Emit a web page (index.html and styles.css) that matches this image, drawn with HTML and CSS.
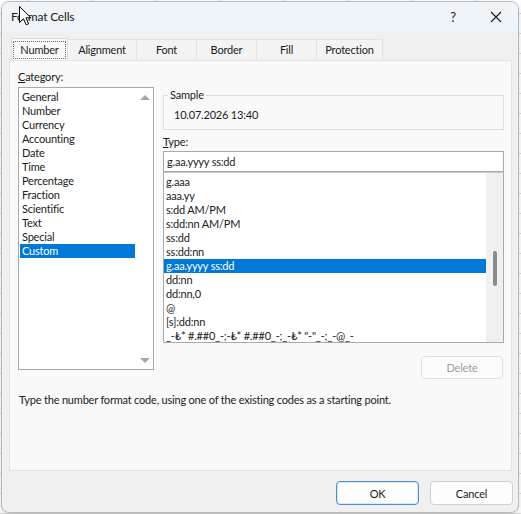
FILE: index.html
```html
<!DOCTYPE html>
<html lang="en">
<head>
    <meta charset="UTF-8">
    <meta name="viewport" content="width=device-width, initial-scale=1.0">
    <title>Format Cells</title>
    <link rel="stylesheet" href="styles.css">
</head>
<body>
    <div class="window">
        <div class="titlebar">
            <span class="title">Format Cells</span>
            <span class="help">?</span>
            <span class="close">
                <svg width="12" height="12" viewBox="0 0 12 12"><path d="M1 1L11 11M11 1L1 11" stroke="#1a1a1a" stroke-width="1.1" fill="none"/></svg>
            </span>
        </div>
        <div class="content">
            <!-- tab strip -->
            <div class="tabs">
                <div class="tab active"><span class="focus">Number</span></div>
                <div class="tab w-align">Alignment</div>
                <div class="tab w-60">Font</div>
                <div class="tab w-60">Border</div>
                <div class="tab w-60">Fill</div>
                <div class="tab w-prot">Protection</div>
            </div>
            <div class="panel">
                <div class="columns">
                    <div class="col-left">
                        <div class="label"><u>C</u>ategory:</div>
                        <div class="listbox category">
                            <ul class="items">
                                <li>General</li>
                                <li>Number</li>
                                <li>Currency</li>
                                <li>Accounting</li>
                                <li>Date</li>
                                <li>Time</li>
                                <li>Percentage</li>
                                <li>Fraction</li>
                                <li>Scientific</li>
                                <li>Text</li>
                                <li>Special</li>
                                <li class="selected">Custom</li>
                            </ul>
                            <div class="vscroll plain">
                                <span class="arrow up"></span>
                                <span class="arrow down"></span>
                            </div>
                        </div>
                    </div>
                    <div class="col-right">
                        <fieldset class="sample">
                            <legend>Sample</legend>
                            <div class="sample-value">10.07.2026 13:40</div>
                        </fieldset>
                        <div class="label type-label"><u>T</u>ype:</div>
                        <div class="input">g.aa.yyyy ss:dd</div>
                        <div class="listbox types">
                            <ul class="items">
                                <li>g.aaa</li>
                                <li>aaa.yy</li>
                                <li>s:dd AM/PM</li>
                                <li>s:dd:nn AM/PM</li>
                                <li>ss:dd</li>
                                <li>ss:dd:nn</li>
                                <li class="selected">g.aa.yyyy ss:dd</li>
                                <li>dd:nn</li>
                                <li>dd:nn,0</li>
                                <li>@</li>
                                <li>[s]:dd:nn</li>
                                <li>_-₺* #.##0_-;-₺* #.##0_-;_-₺* "-"_-;_-@_-</li>
                            </ul>
                            <div class="vscroll track">
                                <span class="thumb"></span>
                            </div>
                        </div>
                        <div class="actions">
                            <button class="btn" disabled>Delete</button>
                        </div>
                    </div>
                </div>
                <p class="hint">Type the number format code, using one of the existing codes as a starting point.</p>
            </div>
            <div class="footer">
                <button class="btn default">OK</button>
                <button class="btn">Cancel</button>
            </div>
        </div>
    </div>
    <!-- mouse pointer sitting over the title -->
    <svg class="cursor" width="13" height="20" viewBox="0 0 13 20">
        <path d="M0.5 0.5L0.5 16.5L4.5 12.8L7.2 18.8L9.6 17.8L7 11.8L12 11.8Z" fill="#fff" stroke="#000" stroke-width="1" stroke-linejoin="round"/>
    </svg>
</body>
</html>
```

FILE: styles.css
```css
*{
    box-sizing: border-box;
}
body{
    margin: 0;
    width: 521px;
    height: 514px;
    overflow: hidden;
    position: relative;
    font-family: Lato, "Noto Sans", sans-serif;
    font-size: 11px;
    letter-spacing: -0.2px;
    color: #1b1b1b;
    background-color: #ffffff;
    /* sheet grid behind the dialog */
    background-image:
        linear-gradient(to right, #d9d9d9 1px, transparent 1px),
        linear-gradient(to bottom, #d9d9d9 1px, transparent 1px);
    background-size: 64px 20px;
    background-position: 27px 13px;
    padding: 1px 0 0 1px;
}
.window{
    width: 518px;
    height: 512px;
    border: 1px solid #b9b9b9;
    border-radius: 8px;
    overflow: hidden;
    background-color: #f0f0f0;
    display: flex;
    flex-direction: column;
    box-shadow: 0 2px 6px rgba(0,0,0,0.15);
}
.titlebar{
    height: 29px;
    flex: none;
    display: flex;
    align-items: center;
    background-color: #eef4f8;
    padding-left: 9px;
}
.title{
    flex: 1;
    font-size: 12px;
}
.help{
    width: 20px;
    text-align: center;
    font-size: 13px;
    margin-right: 23px;
}
.close{
    width: 20px;
    display: flex;
    justify-content: center;
    margin-right: 12px;
}
.content{
    flex: 1;
    display: flex;
    flex-direction: column;
}
.tabs{
    display: flex;
    align-items: flex-end;
    height: 29px;
    padding-left: 9px;
}
.tab{
    height: 21px;
    line-height: 20px;
    text-align: center;
    background-color: #f3f3f3;
    border: 1px solid #e3e3e3;
    border-bottom: none;
    border-left: none;
}
.tab.active{
    height: 22px;
    width: 57px;
    padding: 2px 1px 0 1px;
    background-color: #f9f9f9;
    border: 1px solid #dcdcdc;
    border-bottom: none;
}
.focus{
    display: block;
    height: 18px;
    line-height: 16px;
    border: 1px dotted #6b6b6b;
}
.w-align{
    width: 69px;
}
.w-60{
    width: 60px;
}
.w-prot{
    width: 66px;
}
.panel{
    height: 411px;
    margin: 0 6px 0 7px;
    background-color: #f9f9f9;
    border: 1px solid #e3e3e3;
    padding: 8px 6px 0 8px;
}
.columns{
    display: grid;
    grid-template-columns: 136px 341px;
    column-gap: 9px;
    align-items: start;
}
.label{
    height: 16px;
    line-height: 16px;
}
.listbox{
    display: flex;
    background-color: #ffffff;
    border: 1px solid #a9a9a9;
}
.category{
    margin-top: 2px;
    height: 283px;
}
.items{
    flex: 1;
    list-style: none;
    margin: 0;
    overflow: hidden;
}
.items li{
    height: 14px;
    line-height: 14px;
    padding-left: 2px;
    white-space: nowrap;
}
.items li.selected{
    background-color: #0078d7;
    color: #ffffff;
}
.category .items{
    padding: 2px 1px 0 1px;
}
.vscroll{
    width: 17px;
    flex: none;
}
.plain{
    display: flex;
    flex-direction: column;
    justify-content: space-between;
    align-items: center;
    padding: 7px 0 6px;
}
.arrow{
    width: 0;
    height: 0;
    border-left: 5px solid transparent;
    border-right: 5px solid transparent;
}
.up{
    border-bottom: 5px solid #a6a6a6;
}
.down{
    border-top: 5px solid #a6a6a6;
}
.col-right{
    padding-top: 18px;
}
.sample{
    margin: 0;
    height: 43px;
    padding: 4px 10px 0 10px;
    border: 1px solid #dedede;
}
.sample legend{
    padding: 0 2px;
    margin-left: -6px;
    line-height: 16px;
}
.sample-value{
    line-height: 16px;
}
.type-label{
    margin-top: 4px;
}
.input{
    margin-top: 1px;
    height: 21px;
    line-height: 19px;
    padding-left: 3px;
    background-color: #ffffff;
    border: 1px solid #a9a9a9;
}
.types{
    height: 171px;
    border-top-color: #c8c8c8;
}
.types .items{
    padding: 2px 0 0 0;
}
.types .items li{
    padding-left: 2px;
}
.track{
    background-color: #f0f0f0;
    display: flex;
    justify-content: center;
    padding-top: 78px;
}
.thumb{
    width: 4px;
    height: 35px;
    border-radius: 2px;
    background-color: #8b8b8b;
}
.actions{
    display: flex;
    justify-content: flex-end;
    margin-top: 13px;
    padding-right: 1px;
}
.btn{
    width: 82px;
    height: 23px;
    font-family: inherit;
    font-size: 11px;
    letter-spacing: -0.2px;
    color: #1b1b1b;
    background-color: #fdfdfd;
    border: 1px solid #d0d0d0;
    border-radius: 4px;
    padding: 0;
}
.btn:disabled{
    color: #a0a0a0;
    border-color: #e0e0e0;
    background-color: #fbfbfb;
}
.hint{
    margin: 13px 0 0 1px;
    line-height: 16px;
}
.footer{
    display: flex;
    justify-content: flex-end;
    gap: 11px;
    padding: 10px 5px 0 0;
}
.footer .btn{
    width: 83px;
    height: 24px;
}
.btn.default{
    border-color: #4d8fd1;
    box-shadow: inset 0 0 0 1px #d7e8f7;
}
.cursor{
    position: absolute;
    left: 19px;
    top: 6px;
}
```
